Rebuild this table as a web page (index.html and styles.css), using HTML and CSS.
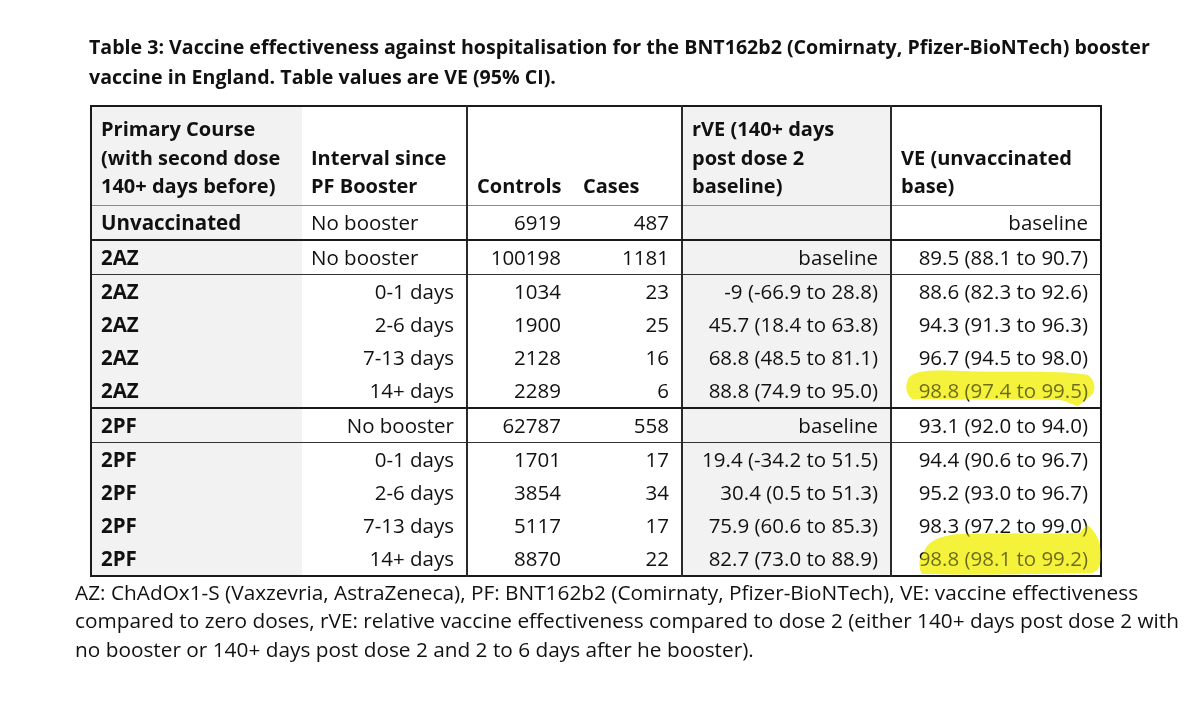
FILE: index.html
```html
<!DOCTYPE html>
<html lang="en">
<head>
<meta charset="utf-8">
<title>Table 3</title>
<link rel="stylesheet" href="styles.css">
</head>
<body>
<div class="page">
  <h1 class="title">Table 3: Vaccine effectiveness against hospitalisation for the BNT162b2 (Comirnaty, Pfizer-BioNTech) booster<br>vaccine in England. Table values are VE (95% CI).</h1>
  <div class="table-wrap">
    <table class="ve">
      <colgroup>
        <col class="c1"><col class="c2"><col class="c3"><col class="c4"><col class="c5"><col class="c6">
      </colgroup>
      <thead>
        <tr>
          <th class="shade">Primary Course<br>(with second dose<br>140+ days before)</th>
          <th class="div-r">Interval since<br>PF Booster</th>
          <th>Controls</th>
          <th class="div-r cases-h">Cases</th>
          <th class="shade div-r">rVE (140+ days<br>post dose 2<br>baseline)</th>
          <th>VE (unvaccinated<br>base)</th>
        </tr>
      </thead>
      <tbody>
        <tr class="thick">
          <td class="shade b">Unvaccinated</td><td class="div-r">No booster</td><td class="num">6919</td><td class="num div-r">487</td><td class="shade num div-r"></td><td class="num">baseline</td>
        </tr>
        <tr class="thin">
          <td class="shade b">2AZ</td><td class="div-r">No booster</td><td class="num">100198</td><td class="num div-r">1181</td><td class="shade num div-r">baseline</td><td class="num">89.5 (88.1 to 90.7)</td>
        </tr>
        <tr>
          <td class="shade b">2AZ</td><td class="num div-r">0-1 days</td><td class="num">1034</td><td class="num div-r">23</td><td class="shade num div-r">-9 (-66.9 to 28.8)</td><td class="num">88.6 (82.3 to 92.6)</td>
        </tr>
        <tr>
          <td class="shade b">2AZ</td><td class="num div-r">2-6 days</td><td class="num">1900</td><td class="num div-r">25</td><td class="shade num div-r">45.7 (18.4 to 63.8)</td><td class="num">94.3 (91.3 to 96.3)</td>
        </tr>
        <tr>
          <td class="shade b">2AZ</td><td class="num div-r">7-13 days</td><td class="num">2128</td><td class="num div-r">16</td><td class="shade num div-r">68.8 (48.5 to 81.1)</td><td class="num">96.7 (94.5 to 98.0)</td>
        </tr>
        <tr class="thick">
          <td class="shade b">2AZ</td><td class="num div-r">14+ days</td><td class="num">2289</td><td class="num div-r">6</td><td class="shade num div-r">88.8 (74.9 to 95.0)</td><td class="num">98.8 (97.4 to 99.5)</td>
        </tr>
        <tr class="thin">
          <td class="shade b">2PF</td><td class="num div-r">No booster</td><td class="num">62787</td><td class="num div-r">558</td><td class="shade num div-r">baseline</td><td class="num">93.1 (92.0 to 94.0)</td>
        </tr>
        <tr>
          <td class="shade b">2PF</td><td class="num div-r">0-1 days</td><td class="num">1701</td><td class="num div-r">17</td><td class="shade num div-r">19.4 (-34.2 to 51.5)</td><td class="num">94.4 (90.6 to 96.7)</td>
        </tr>
        <tr>
          <td class="shade b">2PF</td><td class="num div-r">2-6 days</td><td class="num">3854</td><td class="num div-r">34</td><td class="shade num div-r">30.4 (0.5 to 51.3)</td><td class="num">95.2 (93.0 to 96.7)</td>
        </tr>
        <tr>
          <td class="shade b">2PF</td><td class="num div-r">7-13 days</td><td class="num">5117</td><td class="num div-r">17</td><td class="shade num div-r">75.9 (60.6 to 85.3)</td><td class="num">98.3 (97.2 to 99.0)</td>
        </tr>
        <tr class="last">
          <td class="shade b">2PF</td><td class="num div-r">14+ days</td><td class="num">8870</td><td class="num div-r">22</td><td class="shade num div-r">82.7 (73.0 to 88.9)</td><td class="num">98.8 (98.1 to 99.2)</td>
        </tr>
      </tbody>
    </table>
    <svg class="marker" width="1200" height="718" viewBox="0 0 1200 718" aria-hidden="true">
      <path d="M908 380 C 910 372, 925 369, 960 371 C 1010 373, 1060 370, 1088 375 C 1097 382, 1096 393, 1088 398 L 1078 406 C 1070 404, 1068 401, 1060 400 C 1020 399, 970 400, 912 399 C 906 394, 905 386, 908 380 Z" />
      <path d="M924 552 C 928 541, 940 535, 962 534 C 1010 533, 1060 534, 1080 533 L 1087 525 C 1096 531, 1101 542, 1101 556 C 1101 566, 1097 573, 1090 573 C 1040 574, 970 575, 922 574 C 918 566, 919 558, 924 552 Z" />
    </svg>
    <svg class="marker veil" width="1200" height="718" viewBox="0 0 1200 718" aria-hidden="true">
      <path d="M908 380 C 910 372, 925 369, 960 371 C 1010 373, 1060 370, 1088 375 C 1097 382, 1096 393, 1088 398 L 1078 406 C 1070 404, 1068 401, 1060 400 C 1020 399, 970 400, 912 399 C 906 394, 905 386, 908 380 Z" />
      <path d="M924 552 C 928 541, 940 535, 962 534 C 1010 533, 1060 534, 1080 533 L 1087 525 C 1096 531, 1101 542, 1101 556 C 1101 566, 1097 573, 1090 573 C 1040 574, 970 575, 922 574 C 918 566, 919 558, 924 552 Z" />
    </svg>
  </div>
  <p class="note">AZ: ChAdOx1-S (Vaxzevria, AstraZeneca), PF: BNT162b2 (Comirnaty, Pfizer-BioNTech), VE: vaccine effectiveness<br>compared to zero doses, rVE: relative vaccine effectiveness compared to dose 2 (either 140+ days post dose 2 with<br>no booster or 140+ days post dose 2 and 2 to 6 days after he booster).</p>
</div>
</body>
</html>
```

FILE: styles.css
```css
html, body {
  margin: 0;
  padding: 0;
  background: #ffffff;
}

body {
  width: 1200px;
  height: 718px;
  overflow: hidden;
  font-family: "Open Sans", Lato, sans-serif;
  color: #111111;
}

.page {
  display: flex;
  flex-direction: column;
  padding-top: 32px;
}

.title {
  margin: 0 0 0 89px;
  font-size: 19.6px;
  line-height: 30px;
  font-weight: 700;
  white-space: nowrap;
  color: #111111;
}

.table-wrap {
  position: relative;
  margin-top: 13px;
  margin-left: 90px;
  width: 1010px;
}

.ve {
  border-collapse: collapse;
  table-layout: fixed;
  width: 1010px;
  font-size: 20.5px;
  border: 2px solid #1a1a1a;
}

.c1 { width: 211px; }
.c2 { width: 165px; }
.c3 { width: 106px; }
.c4 { width: 109px; }
.c5 { width: 209px; }
.c6 { width: 210px; }

.ve th {
  font-size: 20px;
  font-weight: 700;
  text-align: left;
  vertical-align: bottom;
  line-height: 28.5px;
  padding: 8px 6px 4px 9px;
  height: 84px;
  white-space: nowrap;
  border-bottom: 1px solid #8a8a8a;
}

.ve th.cases-h {
  padding-left: 10px;
}

.ve td {
  height: 33px;
  line-height: 26px;
  padding: 0 12px 0 9px;
  white-space: nowrap;
  vertical-align: middle;
}

.ve td.num {
  text-align: right;
}

.ve td.b {
  font-weight: 700;
}

.shade {
  background: #f2f2f2;
}

.div-r {
  border-right: 2px solid #2a2a2a;
}

.ve tr.thick td {
  border-bottom: 2px solid #1a1a1a;
}

.ve tr.thin td {
  border-bottom: 1px solid #333333;
}

.marker {
  position: absolute;
  left: -90px;
  top: -105px;
  pointer-events: none;
  mix-blend-mode: multiply;
}

.marker path {
  fill: #f4f23a;
}

.marker.veil {
  mix-blend-mode: normal;
  opacity: 0.4;
}

.note {
  margin: 1px 0 0 75px;
  font-size: 20.8px;
  line-height: 28.8px;
  white-space: nowrap;
  color: #111111;
}
```
